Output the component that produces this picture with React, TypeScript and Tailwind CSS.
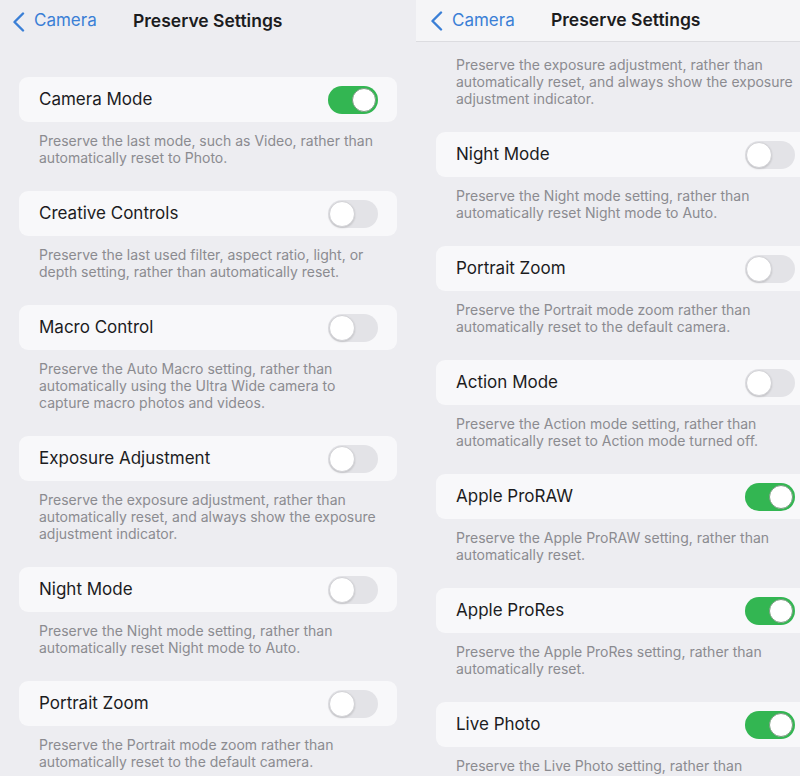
type Setting = {
  title: string
  description: string[]
  on: boolean
}

const leftSettings: Setting[] = [
  {
    title: "Camera Mode",
    description: ["Preserve the last mode, such as Video, rather than", "automatically reset to Photo."],
    on: true,
  },
  {
    title: "Creative Controls",
    description: ["Preserve the last used filter, aspect ratio, light, or", "depth setting, rather than automatically reset."],
    on: false,
  },
  {
    title: "Macro Control",
    description: [
      "Preserve the Auto Macro setting, rather than",
      "automatically using the Ultra Wide camera to",
      "capture macro photos and videos.",
    ],
    on: false,
  },
  {
    title: "Exposure Adjustment",
    description: [
      "Preserve the exposure adjustment, rather than",
      "automatically reset, and always show the exposure",
      "adjustment indicator.",
    ],
    on: false,
  },
  {
    title: "Night Mode",
    description: ["Preserve the Night mode setting, rather than", "automatically reset Night mode to Auto."],
    on: false,
  },
  {
    title: "Portrait Zoom",
    description: ["Preserve the Portrait mode zoom rather than", "automatically reset to the default camera."],
    on: false,
  },
]

const rightSettings: Setting[] = [
  leftSettings[4],
  leftSettings[5],
  {
    title: "Action Mode",
    description: ["Preserve the Action mode setting, rather than", "automatically reset to Action mode turned off."],
    on: false,
  },
  {
    title: "Apple ProRAW",
    description: ["Preserve the Apple ProRAW setting, rather than", "automatically reset."],
    on: true,
  },
  {
    title: "Apple ProRes",
    description: ["Preserve the Apple ProRes setting, rather than", "automatically reset."],
    on: true,
  },
  {
    title: "Live Photo",
    description: ["Preserve the Live Photo setting, rather than", "automatically reset."],
    on: true,
  },
]

function Toggle({ on }: { on: boolean }) {
  return on ? (
    <div className="flex h-[28px] w-[50px] items-center justify-end rounded-full bg-[#33b652] px-[2px]">
      <div className="h-[24px] w-[24px] rounded-full border border-[#7a9a80] bg-white" />
    </div>
  ) : (
    <div className="flex h-[28px] w-[50px] items-center justify-start rounded-full bg-[#e3e3e7] px-[1px]">
      <div className="h-[26px] w-[26px] rounded-full border border-[#d2d2d6] bg-white shadow-[0_1px_2px_rgba(0,0,0,0.15)]" />
    </div>
  )
}

function Description({ lines }: { lines: string[] }) {
  return (
    <div className="px-[20px] pb-[25px] pt-[10px] text-[14px] leading-[17px] text-[#8b8b90]">
      {lines.map((line, i) => (
        <div key={i}>{line}</div>
      ))}
    </div>
  )
}

function SettingBlock({ setting }: { setting: Setting }) {
  return (
    <div>
      <div className="flex h-[45px] items-center justify-between rounded-[9px] bg-[#f8f8fa] pl-[20px] pr-[19px]">
        <span className="text-[17px] text-[#1c1c1e]">{setting.title}</span>
        <Toggle on={setting.on} />
      </div>
      <Description lines={setting.description} />
    </div>
  )
}

function Header({ bar }: { bar?: boolean }) {
  return (
    <div
      className={
        bar
          ? "flex h-[42px] items-center border-b border-[#dcdce0] bg-[#f5f5f7] pl-[14px]"
          : "flex h-[42px] items-center pl-[12px]"
      }
    >
      <div className="flex w-[121px] items-center gap-[9px] text-[#3a7fd6]">
        <svg width="13" height="20" viewBox="0 0 13 20" fill="none" className="mt-[1px]">
          <path d="M11 1.5 2.5 10 11 18.5" stroke="currentColor" strokeWidth="2.4" strokeLinecap="round" strokeLinejoin="round" />
        </svg>
        <span className="text-[17px]">Camera</span>
      </div>
      <span className="text-[17.5px] font-semibold text-[#1c1c1e]">Preserve Settings</span>
    </div>
  )
}

export default function App() {
  return (
    <main
      className="flex h-[776px] w-[800px] overflow-hidden bg-[#ededf1]"
      style={{ fontFamily: "Inter, 'Liberation Sans', sans-serif" }}
    >
      <section className="w-[416px] shrink-0">
        <Header />
        <div className="ml-[19px] w-[378px] pt-[35px]">
          {leftSettings.map((s) => (
            <SettingBlock key={s.title} setting={s} />
          ))}
        </div>
      </section>
      <section className="w-[384px] shrink-0 overflow-hidden">
        <Header bar />
        <div className="ml-[20px] w-[378px]">
          <div className="pt-[4px]">
            <Description lines={leftSettings[3].description} />
          </div>
          {rightSettings.map((s) => (
            <SettingBlock key={s.title} setting={s} />
          ))}
        </div>
      </section>
    </main>
  )
}
